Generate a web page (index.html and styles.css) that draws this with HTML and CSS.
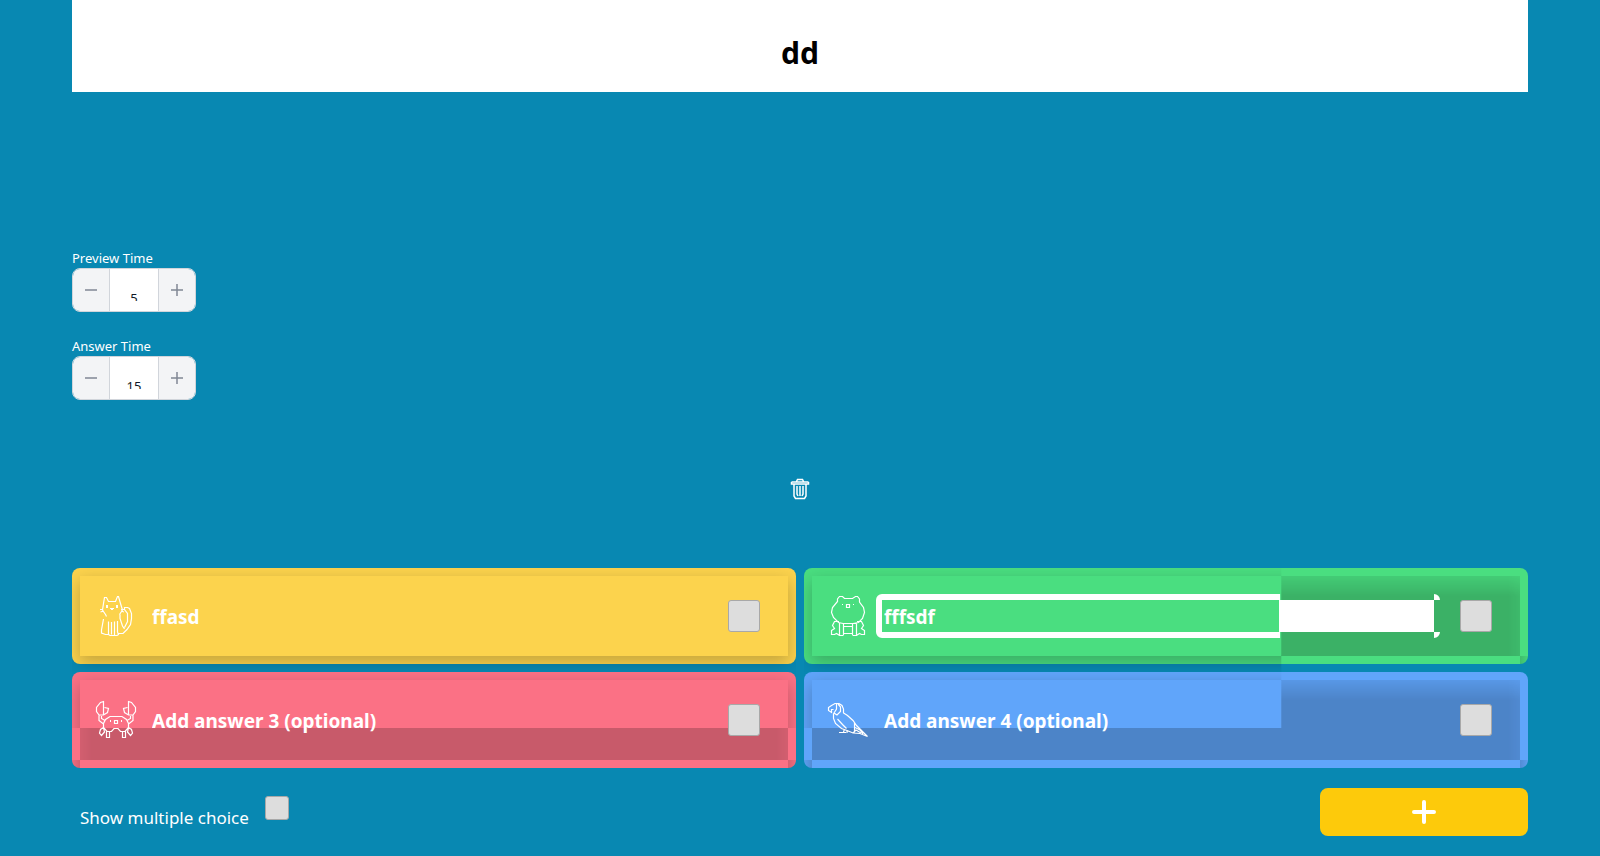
FILE: index.html
```html
<!DOCTYPE html>
<html lang="en">
<head>
<meta charset="utf-8">
<title>Quiz editor</title>
<link rel="stylesheet" href="styles.css">
</head>
<body>
<main class="editor">
  <h1 class="question">dd</h1>

  <section class="times">
    <div class="time">
      <label class="time-label" for="preview">Preview Time</label>
      <div class="stepper">
        <button class="step" type="button" aria-label="Decrease preview time"><svg class="step-icon" viewBox="0 0 12 12"><path d="M0 6h12"/></svg></button>
        <div class="step-value"><input class="step-input" id="preview" type="text" value="5"></div>
        <button class="step" type="button" aria-label="Increase preview time"><svg class="step-icon" viewBox="0 0 12 12"><path d="M0 6h12M6 0v12"/></svg></button>
      </div>
    </div>
    <div class="time">
      <label class="time-label" for="answer-time">Answer Time</label>
      <div class="stepper">
        <button class="step" type="button" aria-label="Decrease answer time"><svg class="step-icon" viewBox="0 0 12 12"><path d="M0 6h12"/></svg></button>
        <div class="step-value"><input class="step-input" id="answer-time" type="text" value="15"></div>
        <button class="step" type="button" aria-label="Increase answer time"><svg class="step-icon" viewBox="0 0 12 12"><path d="M0 6h12M6 0v12"/></svg></button>
      </div>
    </div>
  </section>

  <button class="trash" type="button" aria-label="Delete question">
    <svg class="trash-icon" viewBox="0 0 20 22"><path d="M6.500 3.500L7.500 1.500h5l1 2M1.500 4h17M1.500 4v2h17v-2M4 6v12l1.500 2.500h9L16 18V6M7 8v8l1 2M13 8v8l-1 2M10 8v10"/></svg>
  </button>

  <section class="answers">
    <div class="card yellow">
      <div class="panel">
        <svg class="animal" viewBox="0 0 40 40"><path d="M7.500 7.500L8.500 1.500h2L12.500 5.500H19.500L21.500 .5h1L24.500 7.500L26.500 14L23.500 18.500M7.500 7.500L6.500 14L9.500 18.500M4 13.500h3M4.500 16l3-1M28 13.500h-3M28 16l-3-1M9.500 18.500L10.500 20.500M7.500 23L5.500 34v3L9.500 38.500H12.500V25.500M12.500 38.500L14 39.500h7L22.500 38.500L21.500 36V25M15.500 26V38.500M18.500 25.500V39M24 18.500v4L26.500 30L28.500 33M22.500 37.500h4.500l4-4L34.500 28.500l1-6v-5L33.500 12.500l-2-1h-3v2L31.500 17.500v8L28.500 31.500"/><path class="fill" d="M10 9h2v3h-2zM20 9h2v3h-2zM14 12h4v1h-1v1h-2v-1h-1z"/></svg>
        <div class="field"><input class="answer" type="text" aria-label="Answer 1" value="ffasd"></div>
        <input class="check" type="checkbox" aria-label="Answer 1 is correct">
      </div>
    </div>
    <div class="card green">
      <div class="panel">
        <svg class="animal" viewBox="0 0 40 40"><path d="M9.500 5.500V3L11.500 .5h3L16.500 2.500h8L27.500 .5h2L31.500 3v3L35.500 11.500l1 5-2 6L30.500 26.500L25 27.500H15L10.500 26.500L5.500 21.500l-2-5 1-5zM18.500 8.500h3v3h-3zM11.500 27v12M15.500 27v12M24.500 27v12M28.500 27v12M15.500 30.500h9M15.500 37.500h9M11 25.500H6.500L4.500 29.500 6.500 32.500 3.500 34.500v4h3l2-1 3 2h4M29 25.500h4.500l2 4-2 3 3 2v4h-3l-2-1-3 2h-4"/><path class="fill" d="M14 8h1v1h-1zM25 8h1v1h-1z"/></svg>
        <div class="field focused"><input class="answer" type="text" aria-label="Answer 2" value="fffsdf"></div>
        <input class="check" type="checkbox" aria-label="Answer 2 is correct">
      </div>
    </div>
    <div class="card pink">
      <div class="panel">
        <svg class="animal" viewBox="0 0 40 40"><path d="M7.500 15V1.500L4.500 2.500L.5 7.500v4L3 15h4.500L11.500 12.500l1-4L8.500 7.500M3 15.500V20.500L7.500 24M5.500 16v2.500L9 20.500M32.500 15V1.500l3 1 4 5v4L37 15h-4.500L28.500 12.500l-1-4 4-1M37 15.500v5L32.500 24M34.500 16v2.500L31 20.500M14 16.500h12L30.500 19.500l2 4v4L29 31.500H24.500L22 28.500h-4L15.500 31.500H11L7.500 27.500v-4l2-4zM18.500 20.500h3v3h-3zM10.500 31v6.500h3V31M26.500 31v6.500h3V31M7.500 27.500L4.500 29.500 3.500 33l2 2.500L8.500 32zM32.500 27.500l3 2 1 3.500-2 2.500-3-3.500z"/><path class="fill" d="M14 20h1v2h-1zM25 20h1v2h-1z"/></svg>
        <div class="field"><input class="answer" type="text" aria-label="Answer 3" placeholder="Add answer 3 (optional)"></div>
        <input class="check" type="checkbox" aria-label="Answer 3 is correct">
      </div>
    </div>
    <div class="card blue">
      <div class="panel">
        <svg class="animal" viewBox="0 0 40 40"><path d="M5.500 9.500h-2v3L.5 10.500v-3L3.500 5.500L7 3.500h4L14 5.500L15.500 9v4L19.500 15.500L25 20.500L28.500 25.500L39.500 36.500L32 33.500L25 33L19 30.500L13.500 28.500L7.500 23.500L5.500 18.500V13.500M8.500 4v5L6 13l3 2L12.500 11.500V7L10 4M9.500 19L14.500 24.500l4 4M16.500 29l-1 3M19 30v3M11 32.500h7M26.500 23v9.500M26 27l6 3 3 4M25 33l3-3 5 3"/></svg>
        <div class="field"><input class="answer" type="text" aria-label="Answer 4" placeholder="Add answer 4 (optional)"></div>
        <input class="check" type="checkbox" aria-label="Answer 4 is correct">
      </div>
    </div>
  </section>

  <footer class="actions">
    <div class="multiple">
      <label class="multiple-label" for="multiple">Show multiple choice</label>
      <input class="check small" id="multiple" type="checkbox">
    </div>
    <button class="add" type="button" aria-label="Add question"><svg class="add-icon" viewBox="0 0 24 24"><path d="M2 12h20M12 2v20"/></svg></button>
  </footer>
</main>
</body>
</html>
```
FILE: styles.css
```css
* { box-sizing: border-box; }

body {
  margin: 0;
  background: #0888b2;
  color: #fff;
  font-family: "Noto Sans", "Open Sans", sans-serif;
}

button, input { font: inherit; margin: 0; padding: 0; border: 0; }
svg { display: block; }

.editor {
  display: flex;
  flex-direction: column;
  padding: 0 72px 20px;
}

.question {
  margin: 0;
  padding: 33px 0 19px;
  background: #fff;
  color: #000;
  font-size: 30px;
  line-height: 40px;
  text-align: center;
}

.times {
  display: flex;
  flex-direction: column;
  align-items: flex-start;
  gap: 24px;
  padding-top: 156px;
}

.time-label {
  display: block;
  font-size: 13px;
  line-height: 20px;
}

.stepper {
  display: flex;
  width: 124px;
  height: 44px;
  overflow: hidden;
  border: 1px solid #d1d5db;
  border-radius: 8px;
}

.step {
  display: flex;
  flex: 1;
  align-items: center;
  justify-content: center;
  background: #f3f4f6;
}

.step-icon {
  width: 12px;
  height: 12px;
  fill: none;
  stroke: #808794;
  stroke-width: 1.5;
}

.step-value {
  width: 50px;
  padding-top: 10px;
  border: solid #d1d5db;
  border-width: 0 1px;
  background: #fff;
}

.step-input {
  display: block;
  width: 100%;
  height: 22px;
  padding-top: 16px;
  background: transparent;
  color: #111827;
  clip-path: inset(0);
  font-size: 13px;
  line-height: 20px;
  text-align: center;
}

.trash {
  align-self: center;
  margin: 78px 0 68px;
  background: none;
}

.trash-icon {
  width: 20px;
  height: 22px;
  fill: none;
  stroke: #fff;
  stroke-width: 1.5;
}

.answers {
  display: grid;
  grid-template-columns: 1fr 1fr;
  gap: 8px;
}

.card {
  position: relative;
  padding: 8px;
  border-radius: 8px;
}

.yellow { background: #fcd34d; --face: #fcd34d; }
.green { background: #4ade80; --face: #4ade80; }
.pink { background: #fb7185; --face: #fb7185; }
.blue { background: #60a5fa; --face: #60a5fa; }

/* Shadow in the lower corners of a card */
.green::after,
.pink::before, .pink::after,
.blue::before, .blue::after {
  content: "";
  position: absolute;
  bottom: 0;
  width: 8px;
  height: 8px;
}

.pink::before, .blue::before {
  left: 0;
  border-bottom-left-radius: 8px;
  background: linear-gradient(to left, rgba(0, 0, 0, .15), rgba(0, 0, 0, .05));
}

.green::after, .pink::after, .blue::after {
  right: 0;
  border-bottom-right-radius: 8px;
  background: linear-gradient(to right, rgba(0, 0, 0, .15), rgba(0, 0, 0, .05));
}

.panel {
  position: relative;
  display: flex;
  align-items: center;
  height: 80px;
  padding: 0 28px 0 16px;
  isolation: isolate;
}

.panel::before {
  content: "";
  position: absolute;
  inset: 0;
  z-index: -1;
  background: var(--face);
  box-shadow: 0 6px 16px 1px rgba(0, 0, 0, .22);
  clip-path: inset(-8px -8px -16px -8px);
}

.panel::after {
  content: "";
  position: absolute;
  inset: 0;
  z-index: -1;
}

/* Shaded parts of the panels */
.green .panel::before { clip-path: polygon(-8px -8px, calc(66% + 2px) -8px, calc(66% + 2px) calc(100% + 16px), -8px calc(100% + 16px)); }
.pink .panel::before { clip-path: polygon(-8px -8px, calc(100% + 8px) -8px, calc(100% + 8px) 60%, -8px 60%); }
.blue .panel::before { clip-path: polygon(-8px -8px, calc(66% + 2px) -8px, calc(66% + 2px) 60%, -8px 60%); }

.green .panel::after,
.blue .panel::after {
  background: linear-gradient(rgba(0, 0, 0, .08), rgba(0, 0, 0, .2) 25%);
  clip-path: inset(0 0 0 calc(66% + 2px));
  mask-image: linear-gradient(to left, rgba(0, 0, 0, .8), #000 12px);
}

.pink .panel::after {
  background: rgba(0, 0, 0, .2);
  clip-path: inset(60% 0 0 0);
  mask-image: linear-gradient(to right, rgba(0, 0, 0, .8), #000 12px, #000 calc(100% - 12px), rgba(0, 0, 0, .8));
}

.blue .panel::after {
  clip-path: polygon(calc(66% + 2px) 0, 100% 0, 100% 100%, 0 100%, 0 60%, calc(66% + 2px) 60%);
}

.animal {
  flex: none;
  width: 40px;
  height: 40px;
  overflow: visible;
  fill: none;
  stroke: #fff;
  stroke-width: 1.2;
}

.animal .fill { fill: #fff; stroke: none; }

.field {
  position: relative;
  flex: 1;
  margin: 0 26px 0 14px;
}

.answer {
  display: block;
  width: 100%;
  height: 32px;
  padding: 2px 2px 0;
  outline: 0;
  background: transparent;
  color: #fff;
  font-size: 19px;
  font-weight: 700;
}

.answer::placeholder { color: #fff; opacity: 1; }

.focused .answer {
  background: linear-gradient(90deg, transparent 72%, #fff 72%);
}

.focused::before {
  content: "";
  position: absolute;
  inset: -6px;
  border: 6px solid #fff;
  border-radius: 6px;
  clip-path: polygon(0 0, calc(72% - 2px) 0, calc(72% - 2px) 100%, 0 100%, 0 0, calc(100% - 6px) 0, 100% 0, 100% 6px, calc(100% - 6px) 6px, calc(100% - 6px) calc(100% - 6px), 100% calc(100% - 6px), 100% 100%, calc(100% - 6px) 100%, calc(100% - 6px) 0, 0 0);
}

.check {
  appearance: none;
  flex: none;
  width: 32px;
  height: 32px;
  border: 1px solid #a8a8a8;
  border-radius: 3px;
  background: #ddd;
}

.small { width: 24px; height: 24px; }

.actions {
  display: flex;
  align-items: flex-start;
  justify-content: space-between;
  padding-top: 20px;
}

.multiple {
  display: flex;
  gap: 16px;
  padding: 8px;
}

.multiple-label {
  padding-top: 8px;
  font-size: 17px;
  line-height: 28px;
}

.add {
  display: flex;
  align-items: center;
  justify-content: center;
  width: 208px;
  height: 48px;
  border-radius: 8px;
  background: #fdca0b;
}

.add-icon {
  width: 24px;
  height: 24px;
  fill: none;
  stroke: #fff;
  stroke-width: 4;
  stroke-linecap: round;
}
```
